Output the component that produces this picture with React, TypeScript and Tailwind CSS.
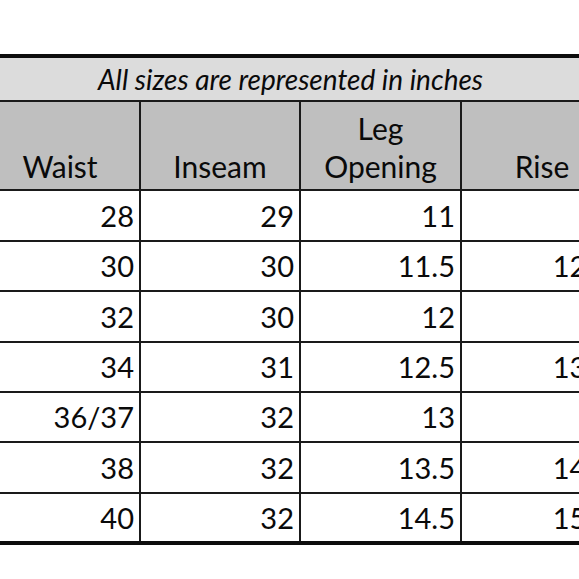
import React from "react";

const rows: { v: string[]; h: string }[] = [
  { v: ["28", "29", "11", ""], h: "h-[51px]" },
  { v: ["30", "30", "11.5", "12.5"], h: "h-[50px]" },
  { v: ["32", "30", "12", ""], h: "h-[51px]" },
  { v: ["34", "31", "12.5", "13.5"], h: "h-[50px]" },
  { v: ["36/37", "32", "13", ""], h: "h-[50px]" },
  { v: ["38", "32", "13.5", "14.5"], h: "h-[51px]" },
  { v: ["40", "32", "14.5", "15.5"], h: "h-[49px]" },
];

const colW = ["w-[158px]", "w-[160px]", "w-[161px]", "w-[162px]"];
const pr = ["pr-[5px]", "pr-[5px]", "pr-[5px]", "pr-[12px]"];

export default function App() {
  return (
    <div
      className="w-[579px] h-[579px] overflow-hidden bg-white pt-[54px] text-[#0a0a0a]"
      style={{ fontFamily: "Lato, 'Open Sans', sans-serif" }}
    >
      <div className="ml-[-19px] w-[641px] border-t-4 border-b-4 border-[#0d0d0d]">
        <div className="h-[44px] bg-[#dcdcdc] border-b-2 border-[#1a1a1a] flex items-center justify-center pr-[22px]">
          <span className="italic text-[28px] leading-none">
            All sizes are represented in inches
          </span>
        </div>
        <div className="flex h-[87px] bg-[#bfbfbf]">
          {[["Waist"], ["Inseam"], ["Leg", "Opening"], ["Rise"]].map((lines, i) => (
            <div
              key={i}
              className={`${colW[i]} shrink-0 flex flex-col justify-end items-center pb-[4px] text-[30px] leading-[38px] ${
                i > 0 ? "border-l-2 border-[#1a1a1a]" : ""
              }`}
            >
              {lines.map((l) => (
                <div key={l}>{l}</div>
              ))}
            </div>
          ))}
        </div>
        {rows.map((r, ri) => (
          <div key={ri} className={`flex ${r.h} border-t-2 border-[#1a1a1a]`}>
            {r.v.map((v, i) => (
              <div
                key={i}
                className={`${colW[i]} ${pr[i]} shrink-0 flex items-center justify-end text-[29px] ${
                  i > 0 ? "border-l-2 border-[#1a1a1a]" : ""
                }`}
              >
                {v}
              </div>
            ))}
          </div>
        ))}
      </div>
    </div>
  );
}
